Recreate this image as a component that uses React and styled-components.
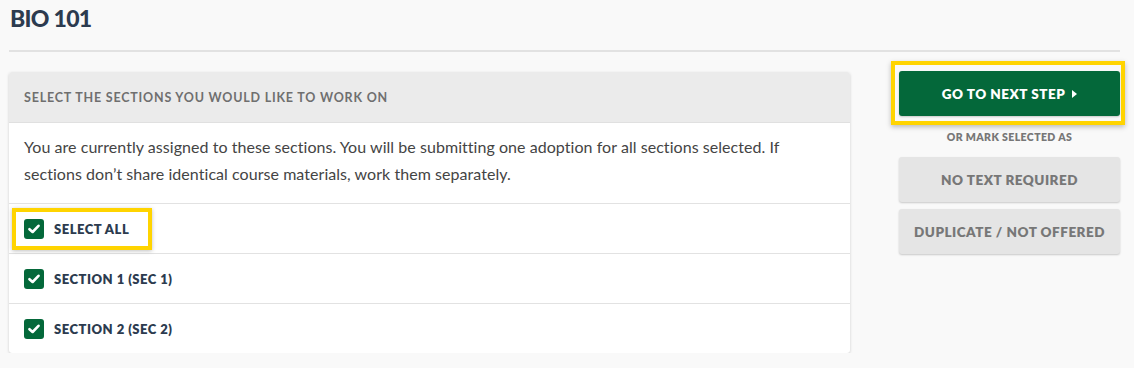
import React from 'react';
import styled, { createGlobalStyle } from 'styled-components';

const COLORS = {
  page: '#f9f9f9',
  navy: '#2c3b4f',
  green: '#04683a',
  yellow: '#ffd400',
  rule: '#e2e2e2',
  grayText: '#6f6f6f',
};

const GlobalStyle = createGlobalStyle`
  body {
    margin: 0;
    background: ${COLORS.page};
    font-family: Lato, "Open Sans", "Liberation Sans", sans-serif;
    -webkit-font-smoothing: antialiased;
  }
`;

const Page = styled.div`
  padding: 0 14px 0 9px;
`;

const Title = styled.h1`
  margin: 0;
  padding: 4px 0 18px 1px;
  line-height: 28px;
  font-size: 23px;
  font-weight: 900;
  letter-spacing: -0.7px;
  color: ${COLORS.navy};
  border-bottom: 2px solid ${COLORS.rule};
`;

const Layout = styled.div`
  display: flex;
  align-items: flex-start;
  gap: 49px;
  margin-top: 20px;
`;

const Card = styled.section`
  flex: 0 0 841px;
  background: #fff;
  border-radius: 3px;
  box-shadow: 0 1px 3px rgba(0, 0, 0, 0.18);
`;

const CardHeader = styled.header`
  height: 50px;
  display: flex;
  align-items: center;
  padding: 0 15px;
  background: #ebebeb;
  border-bottom: 1px solid #e0e0e0;
  border-radius: 3px 3px 0 0;
  font-size: 12.5px;
  font-weight: 700;
  letter-spacing: 0.8px;
  color: ${COLORS.grayText};
  text-transform: uppercase;
`;

const Intro = styled.p`
  margin: 0;
  padding: 10px 15px 16px;
  font-size: 16px;
  letter-spacing: 0.05px;
  line-height: 27px;
  color: #444;
  border-bottom: 1px solid ${COLORS.rule};
`;

const Row = styled.label`
  height: 49px;
  display: flex;
  align-items: center;
  padding: 0 15px;
  border-bottom: ${(p) => (p.$last ? 'none' : `1px solid ${COLORS.rule}`)};
`;

const Marked = styled.span`
  display: inline-flex;
  align-items: center;
  height: 34px;
  margin-left: -12px;
  padding: 0 19px 0 8px;
  border: 4px solid ${COLORS.yellow};
  box-shadow: 0 1px 4px rgba(0, 0, 0, 0.25);
`;

const Box = styled.span`
  width: 20px;
  height: 20px;
  flex: 0 0 20px;
  border-radius: 3px;
  background: ${COLORS.green};
  display: flex;
  align-items: center;
  justify-content: center;
  margin-right: 10px;
`;

const Label = styled.span`
  font-size: 13px;
  font-weight: 800;
  letter-spacing: 0.5px;
  color: ${COLORS.navy};
  text-transform: uppercase;
`;

const Side = styled.aside`
  flex: 0 0 221px;
  display: flex;
  flex-direction: column;
  gap: 7px;
`;

const PrimaryWrap = styled.div`
  position: relative;
  margin-top: -1px;
`;

const Outline = styled.span`
  position: absolute;
  top: -10px;
  bottom: -9px;
  left: -8px;
  right: -5px;
  border: 4px solid ${COLORS.yellow};
  box-shadow: 0 2px 5px rgba(0, 0, 0, 0.25);
  pointer-events: none;
`;

const Button = styled.button`
  width: 100%;
  height: 45px;
  border: none;
  border-radius: 3px;
  font-family: inherit;
  font-size: 13.5px;
  font-weight: 800;
  letter-spacing: 0.5px;
  text-transform: uppercase;
  display: flex;
  align-items: center;
  justify-content: center;
  gap: 7px;
  cursor: pointer;
  background: ${(p) => (p.$primary ? COLORS.green : '#e5e5e5')};
  color: ${(p) => (p.$primary ? '#fff' : '#777')};
  box-shadow: 0 1px 2px rgba(0, 0, 0, 0.2);
`;

const Caption = styled.div`
  margin: 8px 0 7px;
  text-align: center;
  font-size: 10.5px;
  font-weight: 800;
  letter-spacing: 0.4px;
  color: #777;
  text-transform: uppercase;
`;

const Check = () => (
  <svg width="12" height="10" viewBox="0 0 12 10">
    <path d="M1.5 5.2 L4.6 8 L10.5 1.8" fill="none" stroke="#fff" strokeWidth="2.6" strokeLinecap="round" strokeLinejoin="round" />
  </svg>
);

const Caret = () => (
  <svg width="5" height="8" viewBox="0 0 5 8">
    <path d="M0 0 L5 4 L0 8 Z" fill="#fff" />
  </svg>
);

const sections = ['Section 1 (SEC 1)', 'Section 2 (SEC 2)'];

const App = () => {
  return (
    <Page>
      <GlobalStyle />
      <Title>BIO 101</Title>
      <Layout>
        <Card>
          <CardHeader>Select the sections you would like to work on</CardHeader>
          <Intro>
            You are currently assigned to these sections. You will be submitting one adoption for all sections
            selected. If sections don’t share identical course materials, work them separately.
          </Intro>
          <Row>
            <Marked>
              <Box><Check /></Box>
              <Label>Select all</Label>
            </Marked>
          </Row>
          {sections.map((name, i) => (
            <Row key={name} $last={i === sections.length - 1}>
              <Box><Check /></Box>
              <Label>{name}</Label>
            </Row>
          ))}
        </Card>
        <Side>
          <PrimaryWrap>
            <Button $primary>
              Go to next step <Caret />
            </Button>
            <Outline />
          </PrimaryWrap>
          <Caption>Or mark selected as</Caption>
          <Button>No text required</Button>
          <Button>Duplicate / not offered</Button>
        </Side>
      </Layout>
    </Page>
  );
};

export default App;
